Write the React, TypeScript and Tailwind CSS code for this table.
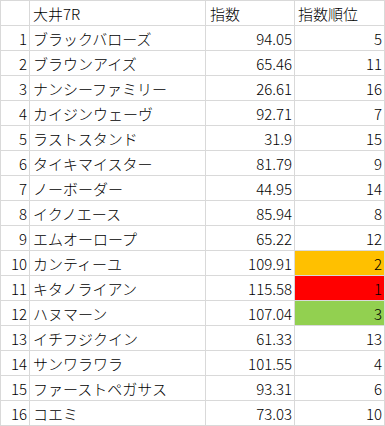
const rows = [
  { no: 1, name: "ブラックバローズ", index: "94.05", rank: 5 },
  { no: 2, name: "ブラウンアイズ", index: "65.46", rank: 11 },
  { no: 3, name: "ナンシーファミリー", index: "26.61", rank: 16 },
  { no: 4, name: "カイジンウェーヴ", index: "92.71", rank: 7 },
  { no: 5, name: "ラストスタンド", index: "31.9", rank: 15 },
  { no: 6, name: "タイキマイスター", index: "81.79", rank: 9 },
  { no: 7, name: "ノーボーダー", index: "44.95", rank: 14 },
  { no: 8, name: "イクノエース", index: "85.94", rank: 8 },
  { no: 9, name: "エムオーロープ", index: "65.22", rank: 12 },
  { no: 10, name: "カンティーユ", index: "109.91", rank: 2 },
  { no: 11, name: "キタノライアン", index: "115.58", rank: 1 },
  { no: 12, name: "ハヌマーン", index: "107.04", rank: 3 },
  { no: 13, name: "イチフジクイン", index: "61.33", rank: 13 },
  { no: 14, name: "サンワラワラ", index: "101.55", rank: 4 },
  { no: 15, name: "ファーストペガサス", index: "93.31", rank: 6 },
  { no: 16, name: "コエミ", index: "73.03", rank: 10 },
];

// top three ranks get a fill, like conditional formatting
function rankBg(rank: number) {
  if (rank === 1) return "bg-[#ff0000]";
  if (rank === 2) return "bg-[#ffc000]";
  if (rank === 3) return "bg-[#92d050]";
  return "bg-white";
}

export default function App() {
  return (
    <div className="w-[385px] bg-white font-['Noto_Sans_CJK_JP',sans-serif] text-[15px] font-light leading-none text-black">
      <div className="grid grid-cols-[28px_175px_88px_89px] auto-rows-[24px] gap-px bg-[#d9d9d9] p-px">
        {/* header */}
        <div className="bg-white" />
        <div className="flex items-center bg-white pl-[3px]">大井7R</div>
        <div className="flex items-center bg-white pl-[4px]">指数</div>
        <div className="flex items-center bg-white pl-[3px]">指数順位</div>

        {rows.map((r) => (
          <div key={r.no} className="contents">
            <div className="flex items-center justify-end bg-white pr-[2px]">{r.no}</div>
            <div className="flex items-center bg-white pl-[3px]">{r.name}</div>
            <div className="flex items-center justify-end bg-white pr-[2px]">{r.index}</div>
            <div className={`flex items-center justify-end pr-[2px] ${rankBg(r.rank)}`}>{r.rank}</div>
          </div>
        ))}
      </div>
    </div>
  );
}
